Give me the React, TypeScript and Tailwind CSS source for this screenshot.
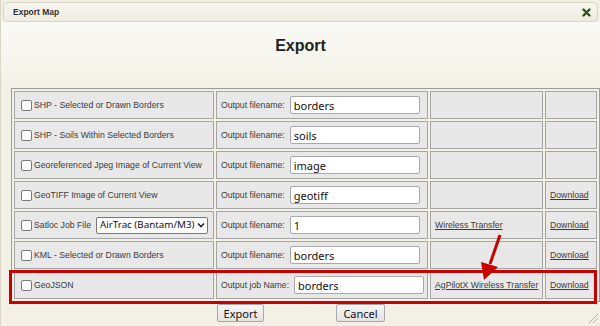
import React from 'react'

const label = "font-['Liberation_Sans',Arial,sans-serif] text-[8.7px] leading-[11px] text-[#3b3b3b] whitespace-nowrap"
const cell = 'h-[28px] p-0 border border-[#a4a4a4] bg-[#e8e8e8] align-middle leading-none'
const field = "h-[18px] w-[130px] rounded-[2px] border border-[#a9a9a9] bg-white px-[3px] font-['Noto_Sans',sans-serif] text-[11px] text-[#111] leading-[16px] outline-none"

type Row = {
  name: string
  fieldLabel: string
  value: string
  wireless?: string
  download?: boolean
  select?: boolean
}

const rows: Row[] = [
  { name: 'SHP - Selected or Drawn Borders', fieldLabel: 'Output filename:', value: 'borders' },
  { name: 'SHP - Soils Within Selected Borders', fieldLabel: 'Output filename:', value: 'soils' },
  { name: 'Georeferenced Jpeg Image of Current View', fieldLabel: 'Output filename:', value: 'image' },
  { name: 'GeoTIFF Image of Current View', fieldLabel: 'Output filename:', value: 'geotiff', download: true },
  { name: 'Satloc Job File', fieldLabel: 'Output filename:', value: '1', wireless: 'Wireless Transfer', download: true, select: true },
  { name: 'KML - Selected or Drawn Borders', fieldLabel: 'Output filename:', value: 'borders', download: true },
  { name: 'GeoJSON', fieldLabel: 'Output job Name:', value: 'borders', wireless: 'AgPilotX Wireless Transfer', download: true },
]

function Checkbox() {
  return <span className="inline-block h-[11px] w-[11px] shrink-0 rounded-[2px] border border-[#7a7a7a] bg-white" />
}

export default function App() {
  return (
    <div className="relative h-[326px] w-[600px] overflow-hidden border-l border-[#d9d6c8] bg-[#f3f1e6]">
      {/* title bar */}
      <div className="mx-[2px] mt-[2px] flex h-[20px] items-center justify-between rounded-[4px] border border-[#d8d4c2] bg-gradient-to-b from-[#f7f6ef] to-[#eeece0] pl-[9px] pr-[6px]">
        <span className="font-['Liberation_Sans',Arial,sans-serif] text-[8.5px] font-bold text-[#333]">Export Map</span>
        <svg width="9" height="9" viewBox="0 0 9 9">
          <path d="M1.5 1.5 L7.5 7.5 M7.5 1.5 L1.5 7.5" stroke="#2f5016" strokeWidth="2.4" strokeLinecap="round" />
        </svg>
      </div>

      <div className="bg-gradient-to-b from-[#fafaf6] to-[#f3f1e6] pt-[14px] pb-[32px]">
        <h1 className="text-center font-['Liberation_Sans',Arial,sans-serif] text-[16px] leading-[20px] font-bold text-[#222]">Export</h1>
      </div>

      <table className="ml-[10px] w-[589px] table-fixed border-separate border-spacing-[2px] border border-[#9c9c9c]">
        <tbody>
          {rows.map((r, i) => (
            <tr key={i}>
              <td className={`${cell} w-[200px] pl-[6px]`}>
                <div className="flex items-center gap-[2px]">
                  <Checkbox />
                  <span className={label}>{r.name}</span>
                  {r.select && (
                    <div className="ml-[3px] flex h-[17px] w-[112px] items-center justify-between rounded-[2px] border border-[#767676] bg-white pl-[3px] pr-[2px]">
                      <span className="whitespace-nowrap font-['Noto_Sans',sans-serif] text-[9.8px] leading-none text-[#111]">AirTrac (Bantam/M3)</span>
                      <svg width="8" height="6" viewBox="0 0 8 6" className="shrink-0">
                        <path d="M1 1.5 L4 4.5 L7 1.5" fill="none" stroke="#222" strokeWidth="1.6" />
                      </svg>
                    </div>
                  )}
                </div>
              </td>
              <td className={`${cell} w-[212px] pl-[4px]`}>
                <div className="flex items-center gap-[5px]">
                  <span className={label}>{r.fieldLabel}</span>
                  <input className={field} defaultValue={r.value} />
                </div>
              </td>
              <td className={`${cell} w-[113px] pl-[4px]`}>
                <div className="flex items-center">
                  {r.wireless && <a className={`${label} underline`}>{r.wireless}</a>}
                </div>
              </td>
              <td className={`${cell} w-[52px] pl-[4px]`}>
                <div className="flex items-center">
                  {r.download && <a className={`${label} underline`}>Download</a>}
                </div>
              </td>
            </tr>
          ))}
        </tbody>
      </table>

      <div className="mt-[2px] flex justify-center">
        {['Export', 'Cancel'].map((b) => (
          <div key={b} className="flex w-[120px] justify-center">
            <button className="h-[18px] rounded-[2px] border border-[#a8a8a8] bg-gradient-to-b from-[#f6f6f6] to-[#e3e3e3] px-[6px] font-['Noto_Sans',sans-serif] text-[11px] leading-none text-[#111]">
              {b}
            </button>
          </div>
        ))}
      </div>

      {/* highlight box */}
      <div className="absolute left-[8px] top-[270px] h-[34px] w-[588px] border-[3px] border-[#c80000]" />

      {/* arrow */}
      <svg className="absolute left-0 top-0" width="600" height="326">
        <line x1="499" y1="235" x2="489" y2="264" stroke="#c80000" strokeWidth="3" />
        <polygon points="480,262 497,267 483,280" fill="#c80000" />
        <g stroke="#b0b0b0" strokeWidth="1">
          <line x1="597" y1="314" x2="588" y2="323" />
          <line x1="597" y1="318" x2="592" y2="323" />
        </g>
      </svg>
    </div>
  )
}
